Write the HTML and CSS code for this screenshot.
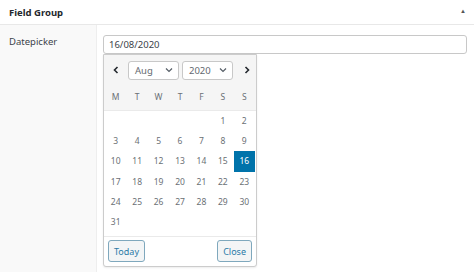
FILE: index.html
```html
<!DOCTYPE html>
<html>
<head>
<meta charset="utf-8">
<link rel="stylesheet" href="styles.css">
</head>
<body>
<div class="panel">
  <div class="panel-header">
    <span class="title">Field Group</span>
    <span class="toggle">▲</span>
  </div>
  <div class="row">
    <div class="label">Datepicker</div>
    <div class="field">
      <div class="input">16/08/2020</div>
      <div class="picker">
        <div class="picker-head">
          <div class="nav-row">
            <span class="arrow">
              <svg width="8" height="8" viewBox="0 0 8 8"><path d="M5.5 1 L2.5 4 L5.5 7" fill="none" stroke="#23282d" stroke-width="1.6"/></svg>
            </span>
            <div class="select month">Aug<svg width="8" height="6" viewBox="0 0 8 6"><path d="M1 1.5 L4 4.5 L7 1.5" fill="none" stroke="#555d66" stroke-width="1.2"/></svg></div>
            <div class="select year">2020<svg width="8" height="6" viewBox="0 0 8 6"><path d="M1 1.5 L4 4.5 L7 1.5" fill="none" stroke="#555d66" stroke-width="1.2"/></svg></div>
            <span class="arrow">
              <svg width="8" height="8" viewBox="0 0 8 8"><path d="M2.5 1 L5.5 4 L2.5 7" fill="none" stroke="#23282d" stroke-width="1.6"/></svg>
            </span>
          </div>
          <div class="weekdays">
            <span>M</span><span>T</span><span>W</span><span>T</span><span>F</span><span>S</span><span>S</span>
          </div>
        </div>
        <div class="days">
          <span></span><span></span><span></span><span></span><span></span><span>1</span><span>2</span>
          <span>3</span><span>4</span><span>5</span><span>6</span><span>7</span><span>8</span><span>9</span>
          <span>10</span><span>11</span><span>12</span><span>13</span><span>14</span><span>15</span><span class="active">16</span>
          <span>17</span><span>18</span><span>19</span><span>20</span><span>21</span><span>22</span><span>23</span>
          <span>24</span><span>25</span><span>26</span><span>27</span><span>28</span><span>29</span><span>30</span>
          <span>31</span><span></span><span></span><span></span><span></span><span></span><span></span>
        </div>
        <div class="picker-foot">
          <span class="btn">Today</span>
          <span class="btn">Close</span>
        </div>
      </div>
    </div>
  </div>
</div>
</body>
</html>
```
FILE: styles.css
```css
html, body {
  margin: 0;
  padding: 0;
  background: #ffffff;
}
body {
  font-family: "Noto Sans", "Open Sans", sans-serif;
  color: #32373c;
  width: 474px;
  height: 272px;
  overflow: hidden;
}
.panel {
  width: 474px;
  height: 272px;
  display: flex;
  flex-direction: column;
}
.panel-header {
  height: 24px;
  border-bottom: 1px solid #e8e8e8;
  display: flex;
  align-items: center;
  justify-content: space-between;
  padding: 0 8px 0 9px;
  flex-shrink: 0;
}
.title {
  font-size: 9.5px;
  font-weight: 700;
  color: #23282d;
}
.toggle {
  font-size: 6px;
  color: #555;
  margin-top: -2px;
}
.row {
  flex: 1;
  display: flex;
}
.label {
  width: 87px;
  background: #f9f9f9;
  border-right: 1px solid #eeeeee;
  padding: 10px 0 0 9px;
  font-size: 9.5px;
  color: #3c434a;
}
.field {
  position: relative;
  padding: 10px 0 0 6px;
}
.input {
  width: 357px;
  height: 17px;
  border: 1px solid #c8c8c8;
  border-radius: 3px;
  font-size: 9.5px;
  line-height: 17px;
  padding-left: 5px;
  color: #3c434a;
}
.picker {
  position: absolute;
  left: 6px;
  top: 29px;
  width: 152px;
  border: 1px solid #cccccc;
  border-radius: 0 0 3px 3px;
  background: #fff;
  box-shadow: 0 1px 2px rgba(0,0,0,0.08);
}
.picker-head {
  background: #f5f5f5;
  border-bottom: 1px solid #eaeaea;
}
.nav-row {
  height: 30px;
  display: flex;
  align-items: center;
  padding: 0 0 0 6px;
}
.arrow {
  width: 12px;
  display: flex;
  justify-content: center;
}
.arrow:last-child {
  margin-left: 8px;
}
.select {
  height: 19px;
  border: 1px solid #c8c8c8;
  border-radius: 3px;
  background: #fff;
  display: flex;
  align-items: center;
  justify-content: space-between;
  padding: 0 5px 0 6px;
  font-size: 9.5px;
  color: #646970;
  box-sizing: border-box;
}
.month {
  width: 51px;
  margin-left: 6px;
}
.year {
  width: 51px;
  margin-left: 3px;
}
.weekdays, .days {
  display: grid;
  grid-template-columns: repeat(7, 1fr);
  padding: 0 1px;
}
.weekdays span {
  height: 25px;
  line-height: 23px;
  text-align: center;
  font-size: 8.5px;
  color: #6b7075;
}
.days {
  padding-bottom: 4px;
}
.days span {
  height: 20.2px;
  line-height: 20px;
  text-align: center;
  font-size: 8.5px;
  color: #6b7075;
}
.days span.active {
  background: #0073aa;
  color: #fff;
}
.picker-foot {
  border-top: 1px solid #eaeaea;
  display: flex;
  justify-content: space-between;
  padding: 3px 4px 4px 4px;
}
.btn {
  height: 22px;
  line-height: 21px;
  box-sizing: border-box;
  padding: 0 5px;
  border: 1px solid #7fa8bd;
  border-radius: 3px;
  background: #f3f5f6;
  color: #2a7aa6;
  font-size: 9px;
}
```
